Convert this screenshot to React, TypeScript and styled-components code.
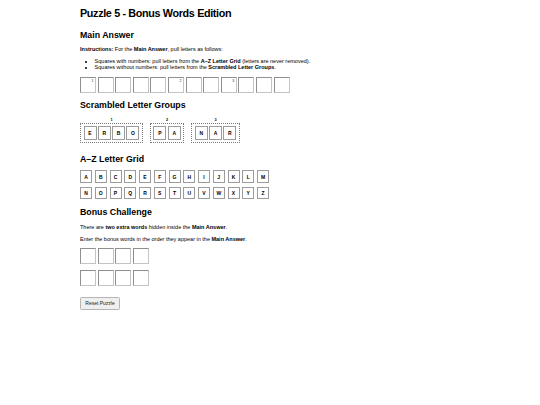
import React, { useState } from 'react'
import styled, { createGlobalStyle } from 'styled-components'

const GlobalStyle = createGlobalStyle`
  body {
    margin: 0;
    background: #fff;
    font-family: 'Liberation Sans', Arial, sans-serif;
    color: #000;
  }
`

const Page = styled.div`
  padding: 6px 0 0 80px;
`

const Title = styled.h1`
  margin: 0;
  font-size: 10.8px;
  letter-spacing: -0.35px;
  line-height: 14px;
  font-weight: bold;
`

const SectionTitle = styled.h2<{ $top: number }>`
  margin: ${(p) => p.$top}px 0 0;
  font-size: 8.8px;
  line-height: 11px;
  font-weight: bold;
`

const Text = styled.p<{ $top: number }>`
  margin: ${(p) => p.$top}px 0 0;
  font-size: 5.5px;
  line-height: 7px;
`

const List = styled.ul`
  margin: 5px 0 0;
  padding-left: 14.6px;
  font-size: 5.5px;
  line-height: 6.3px;
`

const BoxRow = styled.div<{ $top: number }>`
  display: flex;
  gap: 1.6px;
  margin-top: ${(p) => p.$top}px;
`

const AnswerBox = styled.div`
  position: relative;
  width: 16px;
  height: 16px;
  box-sizing: border-box;
  border: 1px solid #8f8f8f;
  border-right-color: #c4c4c4;
  border-bottom-color: #c4c4c4;
  background: #fff;
`

const BoxNumber = styled.span`
  position: absolute;
  top: 1px;
  right: 1.5px;
  font-size: 3.6px;
  line-height: 4px;
  color: #333;
`

const Groups = styled.div`
  display: flex;
  gap: 7px;
  margin-top: 7.5px;
`

const Group = styled.div`
  display: flex;
  flex-direction: column;
  align-items: center;
`

const GroupLabel = styled.div`
  font-size: 3.8px;
  line-height: 5px;
  font-weight: bold;
`

const GroupBox = styled.div`
  display: flex;
  gap: 1.3px;
  padding: 2.2px 2.5px;
  border: 0.8px dotted #7a7a7a;
`

const Tile = styled.div<{ $w: number; $h: number }>`
  width: ${(p) => p.$w}px;
  height: ${(p) => p.$h}px;
  box-sizing: border-box;
  border: 0.8px solid #9c9c9c;
  display: flex;
  align-items: center;
  justify-content: center;
  font-size: 5px;
  font-weight: bold;
  background: #fff;
`

const Grid = styled.div`
  display: grid;
  grid-template-columns: repeat(13, 12px);
  column-gap: 2.75px;
  row-gap: 4px;
  margin-top: 5.5px;
`

const ResetButton = styled.button`
  margin-top: 11px;
  padding: 0;
  height: 13px;
  width: 40px;
  font-family: 'Liberation Sans', Arial, sans-serif;
  font-size: 5px;
  color: #222;
  background: #efefef;
  border: 0.8px solid #b5b5b5;
  border-radius: 1.5px;
`

const numbered: Record<number, number> = { 0: 1, 5: 2, 8: 3 }
const groups = [
  ['E', 'R', 'B', 'O'],
  ['P', 'A'],
  ['N', 'A', 'R'],
]
const alphabet = 'ABCDEFGHIJKLMNOPQRSTUVWXYZ'.split('')

const App = () => {
  const [resetKey, setResetKey] = useState(0)

  return (
    <Page key={resetKey}>
      <GlobalStyle />
      <Title>Puzzle 5 - Bonus Words Edition</Title>

      <SectionTitle $top={9.5}>Main Answer</SectionTitle>
      <Text $top={5.5}>
        <b>Instructions:</b> For the <b>Main Answer</b>, pull letters as follows:
      </Text>
      <List>
        <li>
          Squares with numbers: pull letters from the <b>A–Z Letter Grid</b> (letters are never removed).
        </li>
        <li>
          Squares without numbers: pull letters from the <b>Scrambled Letter Groups</b>.
        </li>
      </List>
      <BoxRow $top={6.5}>
        {Array.from({ length: 12 }).map((_, i) => (
          <AnswerBox key={i}>{numbered[i] && <BoxNumber>{numbered[i]}</BoxNumber>}</AnswerBox>
        ))}
      </BoxRow>

      <SectionTitle $top={6.5}>Scrambled Letter Groups</SectionTitle>
      <Groups>
        {groups.map((g, i) => (
          <Group key={i}>
            <GroupLabel>{i + 1}</GroupLabel>
            <GroupBox>
              {g.map((l, j) => (
                <Tile key={j} $w={13} $h={14}>
                  {l}
                </Tile>
              ))}
            </GroupBox>
          </Group>
        ))}
      </Groups>

      <SectionTitle $top={10.5}>A–Z Letter Grid</SectionTitle>
      <Grid>
        {alphabet.map((l) => (
          <Tile key={l} $w={12} $h={12.5}>
            {l}
          </Tile>
        ))}
      </Grid>

      <SectionTitle $top={7.5}>Bonus Challenge</SectionTitle>
      <Text $top={6}>
        There are <b>two extra words</b> hidden inside the <b>Main Answer</b>.
      </Text>
      <Text $top={5}>
        Enter the bonus words in the order they appear in the <b>Main Answer</b>.
      </Text>
      <BoxRow $top={5.5}>
        {Array.from({ length: 4 }).map((_, i) => (
          <AnswerBox key={i} />
        ))}
      </BoxRow>
      <BoxRow $top={5.5}>
        {Array.from({ length: 4 }).map((_, i) => (
          <AnswerBox key={i} />
        ))}
      </BoxRow>

      <ResetButton onClick={() => setResetKey((k) => k + 1)}>Reset Puzzle</ResetButton>
    </Page>
  )
}

export default App
